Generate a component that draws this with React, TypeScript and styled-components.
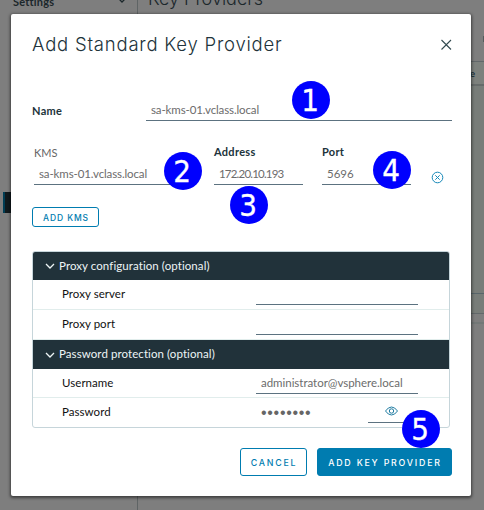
import React from "react";
import styled, { createGlobalStyle } from "styled-components";

const Global = createGlobalStyle`
  *{box-sizing:border-box}
  html,body{margin:0;padding:0;overflow:hidden}
  body{font-family:"Lato","Liberation Sans",sans-serif;color:#21333b}
`;

const Screen = styled.div`
  position:relative;width:484px;height:510px;overflow:hidden;background:#7e7e7e;
`;
const Backdrop = styled.div`
  position:absolute;inset:0;display:flex;
`;
const Side = styled.div`
  flex:none;width:138px;border-right:1px solid #5f6465;padding:0 10px 0 13px;
`;
const SideTitle = styled.div`
  display:flex;justify-content:space-between;margin-top:-5px;height:14px;
  font-size:11px;line-height:13px;font-weight:700;letter-spacing:.2px;color:#1b272b;
`;
const Selected = styled.div`
  margin:183px -10px 0 -10px;height:21px;background:#10191d;border-left:2px solid #003d54;
`;
const Main = styled.div`flex:1;display:flex;flex-direction:column;`;
const MainTitle = styled.div`
  margin:-12px 0 0 10px;height:23px;font-family:"Inter",sans-serif;font-size:18px;line-height:22px;
  font-weight:300;letter-spacing:0;color:#1b272b;
`;
const Tick = styled.div`align-self:flex-end;width:1px;height:6px;margin-top:25px;background:#555b5c;`;
const GridPane = styled.div`
  margin-top:19px;height:253px;background:#787d79;border:solid #62686a;border-width:1px 0;
`;
const GridHead = styled.div`
  height:24px;border-bottom:2px solid #666b6a;text-align:right;padding-right:9px;
  font-size:10px;line-height:23px;font-weight:700;background:#7d817d;
`;
const GridFoot = styled.div`
  margin-top:207px;height:20px;border-top:1px solid #58656a;
`;
const GridEdge = styled.div`margin-top:8px;height:2px;background:#737877;`;
const Dialog = styled.main`
  position:absolute;left:11px;top:14px;width:460px;height:482px;background:#fff;border-radius:2px;
  box-shadow:0 1px 3px 1px rgba(0,0,0,.5);padding:17px 19px 0 21px;
`;
const Header = styled.header`
  display:flex;justify-content:space-between;align-items:center;height:26px;
`;
const Title = styled.h1`
  margin:0;font-family:"Inter",sans-serif;font-size:18.5px;font-weight:300;letter-spacing:.78px;
  white-space:nowrap;line-height:26px;
`;
const NameRow = styled.div`
  display:flex;justify-content:space-between;margin-top:43px;height:21px;
`;
const Label = styled.span<{ $light?: boolean }>`
  font-size:11px;line-height:14px;font-weight:${p => (p.$light ? 400 : 700)};
  letter-spacing:${p => (p.$light ? 0 : 0.3)}px;padding-top:${p => (p.$light ? 1 : 0)}px;
  color:${p => (p.$light ? "#666" : "#21333b")};white-space:nowrap;
`;
const NameLabel = styled(Label)`margin-top:4px;`;
const Field = styled.div<{ $w: number; $spacing?: number }>`
  width:${p => p.$w}px;height:21px;border-bottom:1px solid #5c7280;padding-left:5px;
  font-size:11.5px;line-height:20px;letter-spacing:${p => p.$spacing ?? 0}px;color:#6c6c6c;white-space:nowrap;
`;
const KmsRow = styled.div`display:flex;height:40px;margin:24px 0 0 2px;`;
const Column = styled.div<{ $w: number; $gap: number }>`
  width:${p => p.$w}px;margin-right:${p => p.$gap}px;display:flex;flex-direction:column;justify-content:space-between;
`;
const Remove = styled.svg`margin:26px 0 0 0;flex:none;`;
const Button = styled.button<{ $solid?: boolean; $w: number; $h: number; $size: number; $spacing: number }>`
  display:flex;align-items:center;justify-content:center;width:${p => p.$w}px;height:${p => p.$h}px;
  padding:1px 0 0 1px;border:1px solid #007cb0;border-radius:3px;white-space:nowrap;
  background:${p => (p.$solid ? "#007cb0" : "#fff")};color:${p => (p.$solid ? "#fff" : "#007cb0")};
  font-family:"Inter",sans-serif;font-size:${p => p.$size}px;font-weight:500;letter-spacing:${p => p.$spacing}px;
`;
const AddKms = styled(Button)`margin-top:22px;`;
const Panel = styled.section`
  margin:24px 0 0;width:418px;height:177px;border:1px solid #c6d5da;border-radius:3px;overflow:hidden;
`;
const GroupHead = styled.div<{ $h: number }>`
  height:${p => p.$h}px;background:#21323a;color:#eef5f6;display:flex;align-items:center;gap:4px;
  padding:0 0 2px 12px;font-size:11.5px;letter-spacing:.08px;white-space:nowrap;
  svg{position:relative;top:1px}
`;
const Row = styled.div<{ $h: number }>`
  height:${p => p.$h}px;border-bottom:1px solid #e1edec;display:flex;justify-content:space-between;
  padding:4px 31px 0 29px;
  &:last-child{border-bottom:0}
`;
const RowLabel = styled.span`font-size:11.5px;line-height:20px;letter-spacing:.05px;color:#111;white-space:nowrap;`;
const Secret = styled.div`width:162px;display:flex;justify-content:space-between;padding-left:5px;`;
const Dots = styled.span`
  font:16px/21px "Liberation Sans",sans-serif;letter-spacing:.7px;color:#666;
`;
const EyeField = styled.div`
  display:flex;align-items:flex-start;width:50px;height:21px;border-bottom:1px solid #5c7280;padding:4px 0 0 16px;
`;
const Footer = styled.footer`display:flex;justify-content:flex-end;gap:10px;margin-top:20px;`;
const Badge = styled.div<{ $x: number; $y: number }>`
  position:absolute;left:${p => p.$x}px;top:${p => p.$y}px;width:38px;height:38px;border-radius:50%;
  background:#0000fe;color:#fff;font-family:"DejaVu Sans Condensed","DejaVu Sans",sans-serif;
  font-stretch:condensed;font-size:31px;line-height:38px;text-align:center;text-indent:-2px;
  -webkit-text-stroke:.3px #fff;
`;

const Chevron = () => (
  <svg width="10" height="10" viewBox="0 0 10 10" fill="none" stroke="currentColor" strokeWidth="1.3"><path d="M1 3l4 4 4-4" /></svg>
);

export default function App() {
  return (
    <Screen>
      <Global />
      <Backdrop>
        <Side><SideTitle>Settings<Chevron /></SideTitle><Selected /></Side>
        <Main>
          <MainTitle>Key Providers</MainTitle>
          <Tick />
          <GridPane><GridHead>e</GridHead><GridFoot /></GridPane>
          <GridEdge />
        </Main>
      </Backdrop>
      <Dialog>
        <Header>
          <Title>Add Standard Key Provider</Title>
          <svg width="11" height="11" viewBox="0 0 11 11" stroke="#324a50" strokeWidth="1.1"><path d="M.5 1l9.500 9.500M10 1L.5 10.500" /></svg>
        </Header>
        <NameRow><NameLabel>Name</NameLabel><Field $w={306} $spacing={-0.12}>sa-kms-01.vclass.local</Field></NameRow>
        <KmsRow>
          <Column $w={150} $gap={30}><Label $light>KMS</Label><Field $w={150} $spacing={-0.12}>sa-kms-01.vclass.local</Field></Column>
          <Column $w={89} $gap={19}><Label>Address</Label><Field $w={89} $spacing={-0.8}>172.20.10.193</Field></Column>
          <Column $w={89} $gap={20}><Label>Port</Label><Field $w={89}>5696</Field></Column>
          <Remove width="13" height="13" viewBox="0 0 13 13" fill="none" stroke="#1688b8"><circle cx="6.5" cy="6.5" r="5.3" /><path d="M4.3 4.3l4.4 4.4M8.7 4.3L4.3 8.7" /></Remove>
        </KmsRow>
        <AddKms $w={67} $h={20} $size={8.5} $spacing={0.9}>ADD KMS</AddKms>
        <Panel>
          <GroupHead $h={28}><Chevron />Proxy configuration (optional)</GroupHead>
          <Row $h={30}><RowLabel>Proxy server</RowLabel><Field $w={162} /></Row>
          <Row $h={30}><RowLabel>Proxy port</RowLabel><Field $w={162} /></Row>
          <GroupHead $h={29}><Chevron />Password protection (optional)</GroupHead>
          <Row $h={29}><RowLabel>Username</RowLabel><Field $w={162} $spacing={-0.03}>administrator@vsphere.local</Field></Row>
          <Row $h={29}>
            <RowLabel>Password</RowLabel>
            <Secret>
              <Dots>••••••••</Dots>
              <EyeField><svg width="15" height="10" viewBox="0 0 15 10" fill="none" stroke="#1d7aa0"><path d="M1.500 5Q4.200 1 7.500 1t6 4Q10.800 9 7.500 9t-6-4z" /><circle cx="7.500" cy="5" r="2.200" /></svg></EyeField>
            </Secret>
          </Row>
        </Panel>
        <Footer>
          <Button $w={67} $h={28} $size={8.8} $spacing={1.8}>CANCEL</Button>
          <Button $solid $w={135} $h={28} $size={8.8} $spacing={1.8}>ADD KEY PROVIDER</Button>
        </Footer>
      </Dialog>
      <Badge $x={292} $y={81}>1</Badge>
      <Badge $x={164} $y={152}>2</Badge>
      <Badge $x={230} $y={186}>3</Badge>
      <Badge $x={373} $y={151}>4</Badge>
      <Badge $x={402} $y={410}>5</Badge>
    </Screen>
  );
}
